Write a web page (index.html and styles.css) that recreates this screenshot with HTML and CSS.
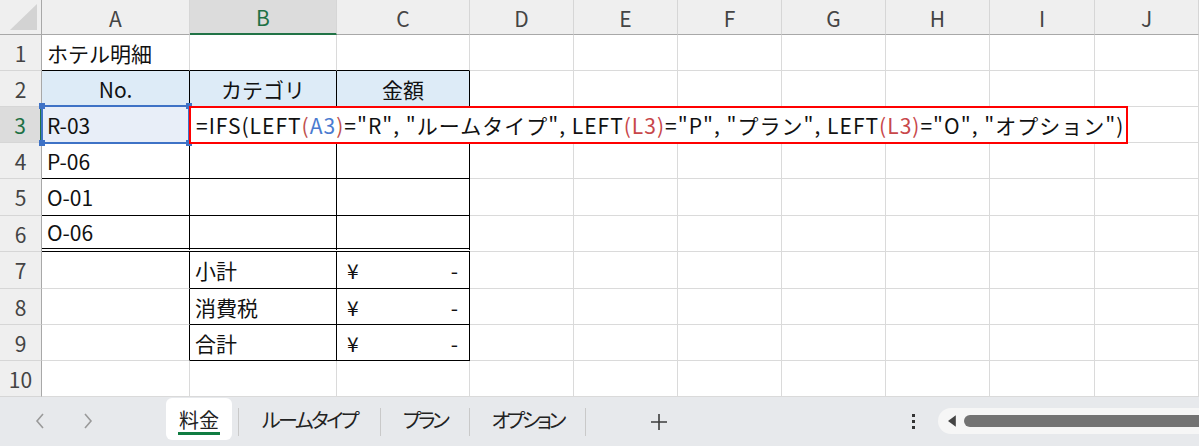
FILE: index.html
```html
<!DOCTYPE html>
<html lang="ja">
<head>
<meta charset="utf-8">
<link rel="stylesheet" href="styles.css">
</head>
<body>
<div class="wrap">
  <div class="sheet">
    <div class="corner"><svg width="30" height="28" viewBox="0 0 30 28"><polygon points="29,0 29,26 2,26" fill="#d3d3d3"/></svg></div>
    <div class="ch">A</div><div class="ch selh">B</div><div class="ch">C</div><div class="ch">D</div><div class="ch">E</div><div class="ch">F</div><div class="ch">G</div><div class="ch">H</div><div class="ch">I</div><div class="ch last">J</div>

    <div class="rh">1</div>
    <div class="c bb">ホテル明細</div><div class="c bb"></div><div class="c bb"></div><div class="c"></div><div class="c"></div><div class="c"></div><div class="c"></div><div class="c"></div><div class="c"></div><div class="c"></div>

    <div class="rh">2</div>
    <div class="c k hd ctr">No.</div><div class="c k hd ctr">カテゴリ</div><div class="c k hd ctr">金額</div><div class="c"></div><div class="c"></div><div class="c"></div><div class="c"></div><div class="c"></div><div class="c"></div><div class="c"></div>

    <div class="rh selr">3</div>
    <div class="c k sel">R-03<span class="hd1"></span><span class="hd2"></span><span class="hd3"></span><span class="hd4"></span></div><div class="c k"></div><div class="c k"></div><div class="c"></div><div class="c"></div><div class="c"></div><div class="c"></div><div class="c"></div><div class="c"></div><div class="c"></div>

    <div class="rh">4</div>
    <div class="c k">P-06</div><div class="c k"></div><div class="c k"></div><div class="c"></div><div class="c"></div><div class="c"></div><div class="c"></div><div class="c"></div><div class="c"></div><div class="c"></div>

    <div class="rh">5</div>
    <div class="c k">O-01</div><div class="c k"></div><div class="c k"></div><div class="c"></div><div class="c"></div><div class="c"></div><div class="c"></div><div class="c"></div><div class="c"></div><div class="c"></div>

    <div class="rh">6</div>
    <div class="c k dbl">O-06</div><div class="c k dbl"></div><div class="c k dbl"></div><div class="c"></div><div class="c"></div><div class="c"></div><div class="c"></div><div class="c"></div><div class="c"></div><div class="c"></div>

    <div class="rh">7</div>
    <div class="c kr"></div><div class="c k">小計</div><div class="c k yen"><span>¥</span><span>-</span></div><div class="c"></div><div class="c"></div><div class="c"></div><div class="c"></div><div class="c"></div><div class="c"></div><div class="c"></div>

    <div class="rh">8</div>
    <div class="c kr"></div><div class="c k">消費税</div><div class="c k yen"><span>¥</span><span>-</span></div><div class="c"></div><div class="c"></div><div class="c"></div><div class="c"></div><div class="c"></div><div class="c"></div><div class="c"></div>

    <div class="rh">9</div>
    <div class="c kr"></div><div class="c k">合計</div><div class="c k yen"><span>¥</span><span>-</span></div><div class="c"></div><div class="c"></div><div class="c"></div><div class="c"></div><div class="c"></div><div class="c"></div><div class="c"></div>

    <div class="rh">10</div>
    <div class="c"></div><div class="c"></div><div class="c"></div><div class="c"></div><div class="c"></div><div class="c"></div><div class="c"></div><div class="c"></div><div class="c"></div><div class="c"></div>
  </div>

  <div class="editor">=IFS(LEFT<span class="pr">(</span><span class="rb">A3</span><span class="pr">)</span>="R", "ルームタイプ", LEFT<span class="rr">(L3)</span>="P", "プラン", LEFT<span class="rr">(L3)</span>="O", "オプション")</div>
</div>

<div class="tabbar">
  <div class="nav">
    <svg width="12" height="18" viewBox="0 0 12 18"><path d="M9 2 L3 9 L9 16" fill="none" stroke="#9a9a9a" stroke-width="1.6"/></svg>
    <svg width="12" height="18" viewBox="0 0 12 18"><path d="M3 2 L9 9 L3 16" fill="none" stroke="#9a9a9a" stroke-width="1.6"/></svg>
  </div>
  <div class="tabs">
    <div class="tab active">料金</div>
    <div class="sep"></div>
    <div class="tab kana">ルームタイプ</div>
    <div class="sep"></div>
    <div class="tab kana tight">プラン</div>
    <div class="sep"></div>
    <div class="tab kana tight">オプション</div>
    <div class="sep"></div>
    <div class="plus"><svg width="18" height="18" viewBox="0 0 18 18"><path d="M9 1 V17 M1 9 H17" stroke="#3c3c3c" stroke-width="1.6"/></svg></div>
  </div>
  <div class="more"><span></span><span></span><span></span></div>
  <div class="scroll">
    <svg width="10" height="14" viewBox="0 0 10 14"><polygon points="9,1 9,13 1,7" fill="#444"/></svg>
    <div class="thumb"></div>
  </div>
</div>
</body>
</html>
```

FILE: styles.css
```css
* { box-sizing: border-box; }
html, body { margin: 0; padding: 0; }
body {
  width: 1199px;
  height: 446px;
  overflow: hidden;
  background: #ffffff;
  font-family: "Noto Sans CJK JP", "Noto Sans", sans-serif;
  color: #111;
}
.wrap { position: relative; }
.sheet {
  display: grid;
  grid-template-columns: 42px 148px 147px 133px 104px 104px 104px 104px 104px 105px 104px;
  grid-template-rows: 35px 36px 36px 36px 36px 37px 36px 37px 36px 36px 36px;
}
.corner {
  background: #efefef;
  border-right: 1px solid #a8a8a8;
  border-bottom: 1px solid #a8a8a8;
  display: flex;
  align-items: flex-end;
  justify-content: flex-end;
  padding: 0 3px 2px 0;
}
.corner svg { display: block; }
.ch {
  background: #efefef;
  border-right: 1px solid #d6d6d6;
  border-bottom: 1px solid #a8a8a8;
  display: flex;
  align-items: center;
  justify-content: center;
  font-size: 21px;
  color: #444;
  padding-top: 1px;
}
.ch.selh {
  background: #dcdcdc;
  color: #1e7145;
  border-bottom: 2px solid #217346;
}
.rh {
  background: #efefef;
  border-right: 1px solid #a8a8a8;
  border-bottom: 1px solid #d6d6d6;
  display: flex;
  align-items: center;
  justify-content: center;
  font-size: 21px;
  color: #444;
}
.rh.selr {
  background: #dcdcdc;
  color: #1e7145;
  border-right: 2px solid #217346;
}
.c {
  border-right: 1px solid #dadada;
  border-bottom: 1px solid #dadada;
  display: flex;
  align-items: center;
  padding: 0 5px;
  font-size: 21px;
  white-space: nowrap;
  position: relative;
}
.c.bb { border-bottom-color: #000; }
.c.k { border-right-color: #000; border-bottom-color: #000; }
.c.kr { border-right-color: #000; }
.c.hd { background: #ddebf7; }
.c.ctr { justify-content: center; }
.c.dbl { border-bottom: 4px double #000; }
.c.yen { justify-content: space-between; padding: 0 11px 0 10px; }
.c.sel { background: #e8eef8; }
.c.sel::after {
  content: "";
  position: absolute;
  left: -1px; top: -2px; right: -1px; bottom: -2px;
  border: 2px solid #3e72c6;
}
.c.sel span {
  position: absolute;
  width: 6px; height: 6px;
  background: #3e72c6;
  z-index: 2;
}
.hd1 { left: -3px; top: -4px; }
.hd2 { right: -3px; top: -4px; }
.hd3 { left: -3px; bottom: -4px; }
.hd4 { right: -3px; bottom: -4px; }

.editor {
  position: absolute;
  left: 189px;
  top: 106px;
  width: 939px;
  height: 38px;
  border: 2px solid #ff0000;
  background: #fff;
  font-size: 21px;
  letter-spacing: 1.01px;
  padding: 0 0 0 5px;
  display: flex;
  align-items: center;
  white-space: pre;
  color: #111;
  z-index: 3;
}
.editor .pr { color: #c0504d; }
.editor .rb { color: #4a7bd0; }
.editor .rr { color: #c8474a; }

.tabbar {
  height: 49px;
  background: #e7e9ec;
  display: flex;
  align-items: flex-start;
  position: relative;
}
.nav {
  display: flex;
  width: 166px;
  padding: 15px 0 0 34px;
  gap: 36px;
}
.nav svg { display: block; }
.tabs {
  display: flex;
  align-items: flex-start;
}
.tab {
  height: 42px;
  padding: 0 17px;
  display: flex;
  align-items: center;
  font-size: 20px;
  color: #222;
  font-feature-settings: "palt";
  margin-top: 1px;
}
.tab.kana { letter-spacing: -2.5px; }
.tab.kana.tight { letter-spacing: -3.3px; padding: 0 16px; }
.tab.active {
  background: #fff;
  border-radius: 6px;
  position: relative;
  padding: 0 12px;
  width: 66px;
  justify-content: center;
}
.tab.active::after {
  content: "";
  position: absolute;
  left: 12px; right: 12px;
  bottom: 5px;
  height: 3px;
  background: #107c41;
}
.sep {
  width: 1px;
  height: 28px;
  background: #c9c9c9;
  margin: 11px 6px 0;
}
.plus {
  padding: 16px 0 0 58px;
}
.plus svg { display: block; }
.more {
  position: absolute;
  left: 912px;
  top: 17px;
  display: flex;
  flex-direction: column;
  gap: 3px;
}
.more span {
  width: 3px; height: 3px;
  background: #333;
}
.scroll {
  position: absolute;
  left: 938px;
  top: 11px;
  width: 280px;
  height: 26px;
  background: #f6f6f6;
  border-radius: 13px;
  display: flex;
  align-items: center;
  padding-left: 9px;
  gap: 7px;
}
.scroll svg { display: block; }
.thumb {
  width: 260px;
  height: 12px;
  background: #737373;
  border-radius: 6px;
}
```
